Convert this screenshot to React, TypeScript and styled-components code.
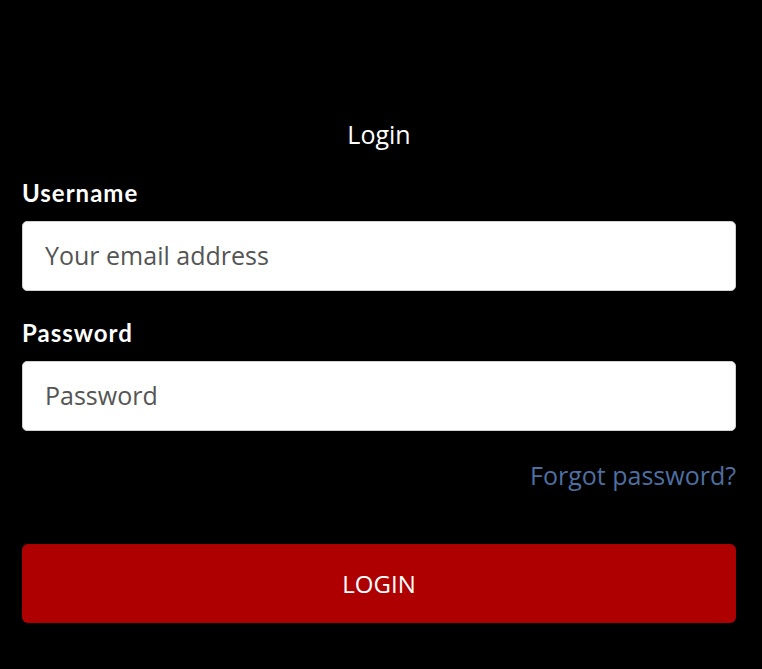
import React from "react";
import styled, { createGlobalStyle } from "styled-components";

const Global = createGlobalStyle`
  html, body { margin: 0; padding: 0; background: #000; }
  body { font-family: "Open Sans", "Noto Sans", sans-serif; }
  * { box-sizing: border-box; }
`;

const Page = styled.div`
  min-height: 669px;
  background: #000;
  padding: 116px 26px 0 22px;
`;

const Form = styled.form`
  display: flex;
  flex-direction: column;
`;

const Title = styled.h1`
  margin: 0;
  font-family: "Open Sans", sans-serif;
  font-weight: 400;
  font-size: 25px;
  line-height: 36px;
  color: #fff;
  text-align: center;
`;

const Label = styled.label<{ $top: number }>`
  display: block;
  margin-top: ${(p) => p.$top}px;
  font-family: "Lato", "Noto Sans", sans-serif;
  font-weight: 700;
  font-size: 24px;
  letter-spacing: 1px;
  line-height: 28px;
  color: #fff;
`;

const Input = styled.input`
  display: block;
  width: 100%;
  height: 70px;
  margin-top: 14px;
  padding: 0 22px 2px;
  border: 1px solid #cfcfcf;
  border-radius: 5px;
  background: #fff;
  font-family: "Open Sans", sans-serif;
  font-size: 25px;
  color: #333;
  outline: none;
  &::placeholder { color: #555; opacity: 1; }
`;

const ForgotRow = styled.div`
  display: flex;
  justify-content: flex-end;
  margin-top: 26px;
`;

const ForgotLink = styled.a`
  font-family: "Open Sans", sans-serif;
  font-size: 25px;
  line-height: 36px;
  color: #4e6fa0;
  text-decoration: none;
`;

const Button = styled.button`
  margin-top: 51px;
  height: 79px;
  width: 100%;
  border: none;
  border-radius: 6px;
  background: #ae0000;
  color: #fff;
  font-family: "Open Sans", sans-serif;
  font-size: 24px;
  text-transform: uppercase;
  cursor: pointer;
`;

export default function App() {
  return (
    <Page>
      <Global />
      <Form onSubmit={(e) => e.preventDefault()}>
        <Title>Login</Title>
        <Label $top={27} htmlFor="user">Username</Label>
        <Input id="user" type="email" placeholder="Your email address" />
        <Label $top={28} htmlFor="pass">Password</Label>
        <Input id="pass" type="password" placeholder="Password" />
        <ForgotRow>
          <ForgotLink href="#">Forgot password?</ForgotLink>
        </ForgotRow>
        <Button type="submit">Login</Button>
      </Form>
    </Page>
  );
}
